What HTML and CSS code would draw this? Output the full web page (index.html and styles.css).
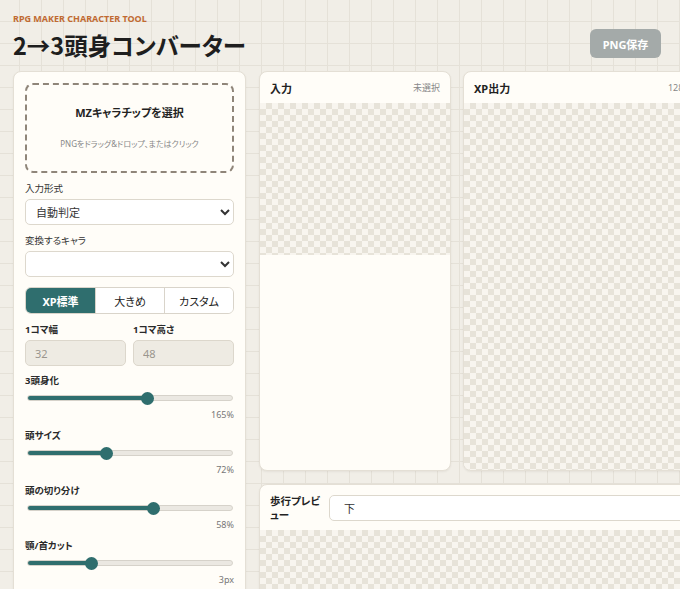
FILE: index.html
```html
<!DOCTYPE html>
<html lang="ja">
<head>
    <meta charset="UTF-8">
    <meta name="viewport" content="width=device-width, initial-scale=1.0">
    <title>2→3頭身コンバーター</title>
    <link rel="stylesheet" href="styles.css">
</head>
<body>
    <div class="app">
        <header class="top">
            <div class="brand">
                <div class="kicker">RPG MAKER CHARACTER TOOL</div>
                <h1 class="title">2→3頭身コンバーター</h1>
            </div>
            <button class="save-btn" disabled>PNG保存</button>
        </header>

        <div class="main">
            <!-- 左: 設定パネル -->
            <aside class="panel side">
                <div class="drop">
                    <div class="drop-title">MZキャラチップを選択</div>
                    <div class="drop-sub">PNGをドラッグ&amp;ドロップ、またはクリック</div>
                </div>

                <div class="field">
                    <label class="lbl">入力形式</label>
                    <select class="sel">
                        <option>自動判定</option>
                    </select>
                </div>

                <div class="field">
                    <label class="lbl">変換するキャラ</label>
                    <select class="sel">
                        <option></option>
                    </select>
                </div>

                <div class="seg">
                    <button class="seg-btn active">XP標準</button>
                    <button class="seg-btn">大きめ</button>
                    <button class="seg-btn">カスタム</button>
                </div>

                <div class="pair">
                    <div>
                        <label class="lbl bold">1コマ幅</label>
                        <input class="num" type="text" value="32" disabled>
                    </div>
                    <div>
                        <label class="lbl bold">1コマ高さ</label>
                        <input class="num" type="text" value="48" disabled>
                    </div>
                </div>

                <div class="slider">
                    <label class="lbl bold">3頭身化</label>
                    <input class="range" type="range" min="0" max="1000" value="593" style="--p: 58.7%">
                    <div class="val">165%</div>
                </div>
                <div class="slider">
                    <label class="lbl bold">頭サイズ</label>
                    <input class="range" type="range" min="0" max="1000" value="376" style="--p: 38.3%">
                    <div class="val">72%</div>
                </div>
                <div class="slider">
                    <label class="lbl bold">頭の切り分け</label>
                    <input class="range" type="range" min="0" max="1000" value="624" style="--p: 61.6%">
                    <div class="val">58%</div>
                </div>
                <div class="slider">
                    <label class="lbl bold">顎/首カット</label>
                    <input class="range" type="range" min="0" max="1000" value="298" style="--p: 31%">
                    <div class="val">3px</div>
                </div>
            </aside>

            <!-- 右: プレビュー -->
            <section class="views">
                <div class="panel view">
                    <div class="view-head">
                        <span class="view-title">入力</span>
                        <span class="view-meta">未選択</span>
                    </div>
                    <div class="checker input-canvas"></div>
                </div>

                <div class="panel view">
                    <div class="view-head">
                        <span class="view-title">XP出力</span>
                        <span class="view-meta">128×192</span>
                    </div>
                    <div class="checker output-canvas"></div>
                </div>

                <div class="panel walk">
                    <div class="walk-head">
                        <span class="walk-title">歩行プレビュー</span>
                        <select class="sel walk-sel">
                            <option>下</option>
                        </select>
                    </div>
                    <div class="checker walk-canvas"></div>
                </div>
            </section>
        </div>
    </div>
</body>
</html>
```

FILE: styles.css
```css
html, body {
    margin: 0;
    height: 100%;
    overflow: hidden;
}
body {
    font-family: "Noto Sans", "Noto Sans CJK JP", sans-serif;
    font-feature-settings: "palt";
    color: #222;
    background-color: #f1eee7;
    background-image:
        linear-gradient(to right, #e5e1d8 1px, transparent 1px),
        linear-gradient(to bottom, #e5e1d8 1px, transparent 1px);
    background-size: 22px 22px;
    background-position: 19px 21px;
}
.app {
    width: 702px;
    padding: 12px 13px 0;
}

/* ヘッダー */
.top {
    display: flex;
    justify-content: space-between;
    align-items: flex-start;
    margin-bottom: 10px;
}
.kicker {
    font-size: 9px;
    line-height: 14px;
    font-weight: 700;
    color: #c06a32;
}
.title {
    margin: 3px 0 0;
    font-size: 23.5px;
    line-height: 32px;
    font-weight: 700;
    color: #1e1e1e;
    font-family: "Noto Sans CJK JP", "Noto Sans", sans-serif;
}
.save-btn {
    margin: 17px 54px 0 0;
    width: 71px;
    height: 29px;
    border: none;
    border-radius: 6px;
    background-color: #a4aaa9;
    color: #fff;
    font-family: inherit;
    font-feature-settings: "palt";
    font-size: 11px;
    font-weight: 700;
    padding: 0;
}

.main {
    display: grid;
    grid-template-columns: 233px 1fr;
    gap: 13px;
    align-items: start;
}
.panel {
    background-color: #fffdf8;
    border: 1px solid #e4dfd5;
    border-radius: 8px;
    box-shadow: 0 1px 2px rgba(90, 80, 60, 0.08);
    overflow: hidden;
}

/* 左パネル */
.side {
    padding: 11px 11px 20px;
    height: 560px;
}
.drop {
    height: 86px;
    border: 2px dashed #8f8579;
    border-radius: 8px;
    display: flex;
    flex-direction: column;
    align-items: center;
    justify-content: flex-start;
}
.drop-title {
    margin-top: 20px;
    font-size: 11px;
    line-height: 16px;
    font-weight: 700;
    color: #222;
}
.drop-sub {
    margin-top: 17px;
    font-size: 8px;
    line-height: 12px;
    color: #888;
}
.field {
    margin-top: 9px;
}
.lbl {
    display: block;
    font-size: 9.5px;
    line-height: 14px;
    margin-bottom: 3px;
    color: #333;
}
.lbl.bold {
    font-weight: 700;
    color: #2a2a2a;
}
.sel {
    display: block;
    width: 100%;
    height: 26px;
    border: 1px solid #ddd8cd;
    border-radius: 5px;
    background-color: #fff;
    font-family: inherit;
    font-feature-settings: "palt";
    font-size: 11px;
    color: #333;
    padding: 0 6px;
}
.seg {
    margin-top: 10px;
    display: grid;
    grid-template-columns: 1fr 1fr 1fr;
    border: 1px solid #d9d4ca;
    border-radius: 6px;
    overflow: hidden;
    height: 27px;
    box-sizing: border-box;
}
.seg-btn {
    border: none;
    border-left: 1px solid #d9d4ca;
    background-color: #fff;
    font-family: inherit;
    font-feature-settings: "palt";
    font-size: 11px;
    color: #222;
    padding: 0;
}
.seg-btn:first-child {
    border-left: none;
}
.seg-btn.active {
    background-color: #2f6e6e;
    color: #fff;
    font-weight: 700;
}
.pair {
    margin-top: 9px;
    display: grid;
    grid-template-columns: 1fr 1fr;
    gap: 7px;
}
.num {
    display: block;
    width: 100%;
    box-sizing: border-box;
    height: 26px;
    border: 1px solid #dcd7cc;
    border-radius: 5px;
    background-color: #eeebe3;
    font-family: inherit;
    font-size: 11px;
    color: #9a968e;
    padding: 0 9px;
}
.slider {
    margin-top: 8px;
}
.slider + .slider {
    margin-top: 7px;
}
.slider .lbl {
    margin-bottom: 0;
}
.range {
    -webkit-appearance: none;
    appearance: none;
    display: block;
    width: 206px;
    height: 20px;
    margin: 0 0 0 2px;
    background: transparent;
}
.range::-webkit-slider-runnable-track {
    height: 6px;
    border-radius: 3px;
    border: 1px solid #d6d2ca;
    background: linear-gradient(to right, #2f6e6e var(--p), #ebe8e2 var(--p));
}
.range::-webkit-slider-thumb {
    -webkit-appearance: none;
    width: 13px;
    height: 13px;
    margin-top: -4.5px;
    border-radius: 50%;
    background-color: #2f6e6e;
    border: none;
}
.val {
    text-align: right;
    font-size: 9px;
    line-height: 14px;
    color: #777;
}

/* 右側 */
.views {
    display: grid;
    grid-template-columns: 192px 252px;
    gap: 13px 12px;
}
.view {
    height: 400px;
    box-sizing: border-box;
    display: flex;
    flex-direction: column;
}
.view-head {
    height: 31px;
    flex: none;
    display: flex;
    align-items: center;
    justify-content: space-between;
    padding: 0 10px;
}
.view-title {
    font-size: 11px;
    font-weight: 700;
    color: #222;
}
.view-meta {
    font-size: 9px;
    color: #888;
}
.checker {
    background-color: #f8f5ef;
    background-image:
        linear-gradient(45deg, #e7e3d9 25%, transparent 25%, transparent 75%, #e7e3d9 75%),
        linear-gradient(45deg, #e7e3d9 25%, transparent 25%, transparent 75%, #e7e3d9 75%);
    background-size: 12px 12px;
    background-position: 0 0, 6px 6px;
}
.input-canvas {
    height: 152px;
}
.output-canvas {
    flex: 1;
}
.walk {
    grid-column: 1 / 3;
    height: 200px;
}
.walk-head {
    display: flex;
    align-items: center;
    gap: 6px;
    padding: 9px 10px 8px;
}
.walk-title {
    width: 53px;
    font-size: 10.5px;
    line-height: 14px;
    font-weight: 700;
    color: #222;
}
.walk-sel {
    flex: 1;
    padding-left: 10px;
}
.walk-canvas {
    height: 120px;
}
```
